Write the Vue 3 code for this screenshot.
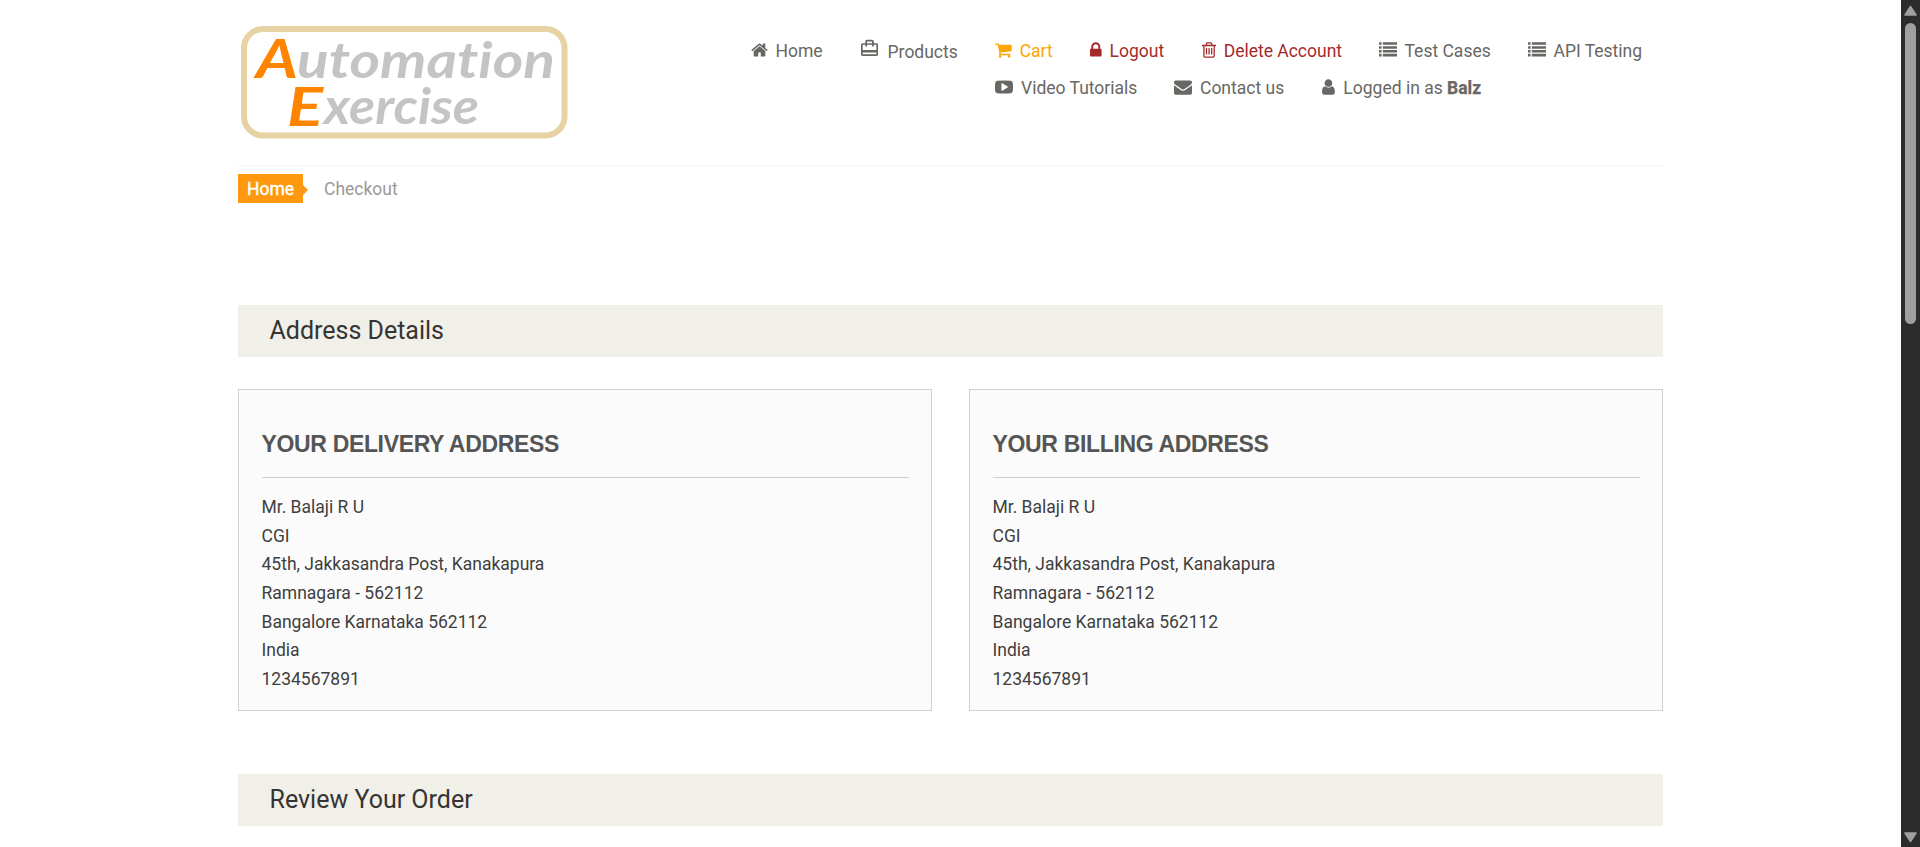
<script setup>
const icons = {
  home: { box: '49 0 1694 1792', d: 'M1472 992v480q0 26-19 45t-45 19h-384v-384h-256v384h-384q-26 0-45-19t-19-45v-480q0-1 .5-3t.5-3l575-474 575 474q1 2 1 6zm223-69l-62 74q-8 9-21 11h-3q-13 0-21-7l-692-577-692 577q-12 8-24 7-13-2-21-11l-62-74q-8-10-7-23.5t11-21.5l719-599q32-26 76-26t76 26l244 204v-195q0-14 9-23t23-9h192q14 0 23 9t9 23v408l219 182q10 8 11 21.5t-7 23.5z' },
  bag: { box: '2 0 20 24', d: 'M20 6h-3V4c0-1.11-.89-2-2-2H9c-1.11 0-2 .89-2 2v2H4c-1.11 0-2 .89-2 2v11c0 1.11.89 2 2 2h16c1.11 0 2-.89 2-2V8c0-1.11-.89-2-2-2zM9 4h6v2H9V4zm11 15H4v-2h16v2zm0-5H4V8h3v2h2V8h6v2h2V8h3v6z' },
  cart: { box: '64 0 1664 1792', d: 'M704 1536q0 52-38 90t-90 38-90-38-38-90 38-90 90-38 90 38 38 90zm896 0q0 52-38 90t-90 38-90-38-38-90 38-90 90-38 90 38 38 90zm128-1088v512q0 24-16.5 42.5t-40.5 21.5l-1044 122q13 60 13 70 0 16-24 64h920q26 0 45 19t19 45-19 45-45 19h-1024q-26 0-45-19t-19-45q0-11 8-31.5t16-36 21.5-40 15.5-29.5l-177-823h-204q-26 0-45-19t-19-45 19-45 45-19h256q16 0 28.5 6.5t19.5 15.5 13 24.5 8 26 5.5 29.5 4.5 26h1201q26 0 45 19t19 45z' },
  lock: { box: '320 0 1152 1792', d: 'M640 768h512v-192q0-106-75-181t-181-75-181 75-75 181v192zm832 96v576q0 40-28 68t-68 28h-960q-40 0-68-28t-28-68v-576q0-40 28-68t68-28h32v-192q0-184 132-316t316-132 316 132 132 316v192h32q40 0 68 28t28 68z' },
  trash: { box: '192 0 1408 1792', d: 'M704 736v576q0 14-9 23t-23 9h-64q-14 0-23-9t-9-23v-576q0-14 9-23t23-9h64q14 0 23 9t9 23zm256 0v576q0 14-9 23t-23 9h-64q-14 0-23-9t-9-23v-576q0-14 9-23t23-9h64q14 0 23 9t9 23zm256 0v576q0 14-9 23t-23 9h-64q-14 0-23-9t-9-23v-576q0-14 9-23t23-9h64q14 0 23 9t9 23zm128 724v-948h-896v948q0 22 7 40.5t14.5 27 10.5 8.5h832q3 0 10.5-8.5t14.5-27 7-40.5zm-672-1076h448l-48-117q-7-9-17-11h-317q-10 2-17 11zm928 32v64q0 14-9 23t-23 9h-96v948q0 83-47 143.5t-113 60.5h-832q-66 0-113-58.5t-47-141.5v-952h-96q-14 0-23-9t-9-23v-64q0-14 9-23t23-9h309l70-167q15-37 54-63t79-26h320q40 0 79 26t54 63l70 167h309q14 0 23 9t9 23z' },
  list: { box: '0 0 1792 1792', d: 'M0 128h256v256H0zM384 128h1408v256H384zM0 512h256v256H0zM384 512h1408v256H384zM0 896h256v256H0zM384 896h1408v256H384zM0 1280h256v256H0zM384 1280h1408v256H384z' },
  video: { box: '0 0 1792 1792', d: 'M1280 896q0-37-30-54l-512-320q-31-20-65-2-33 18-33 56v640q0 38 33 56 16 8 31 8 20 0 34-10l512-320q30-17 30-54zm512 0q0 96-1 150t-8.5 136.5-22.5 147.5q-16 73-69 123t-124 58q-222 25-671 25t-671-25q-71-8-124.5-58t-69.5-123q-14-65-21.5-147.5t-8.5-136.5-1-150 1-150 8.5-136.5 22.5-147.5q16-73 69-123t124-58q222-25 671-25t671 25q71 8 124.5 58t69.5 123q14 65 21.5 147.5t8.5 136.5 1 150z' },
  mail: { box: '0 0 1792 1792', d: 'M1792 710v794q0 66-47 113t-113 47h-1472q-66 0-113-47t-47-113v-794q44 49 101 87 362 246 497 345 57 42 92.5 65.5t94.5 48 110 24.5h2q51 0 110-24.5t94.5-48 92.5-65.5q170-123 498-345 57-39 100-87zm0-294q0 79-49 151t-122 123q-376 261-468 325-10 7-42.5 31t-54 38.5-52 32.5-57.5 27-50 9h-2q-23 0-50-9t-57.5-27-52-32.5-54-38.5-42.5-31q-91-64-262-182.5t-205-142.5q-62-42-117-115.5t-55-136.5q0-78 41.5-130t118.5-52h1472q65 0 112.5 47t47.5 113z' },
  user: { box: '256 0 1280 1792', d: 'M1536 1399q0 109-62.5 187t-150.5 78h-854q-88 0-150.5-78t-62.5-187q0-85 8.5-160.5t31.5-152 58.5-131 94-89 134.5-34.5q131 128 313 128t313-128q76 0 134.5 34.5t94 89 58.5 131 31.5 152 8.5 160.5zm-256-887q0 159-112.5 271.5t-271.5 112.5-271.5-112.5-112.5-271.5 112.5-271.5 271.5-112.5 271.5 112.5 112.5 271.5z' }
}
const rows = [
  [
    { icon: 'home', text: 'Home' },
    { icon: 'bag', text: 'Products' },
    { icon: 'cart', text: 'Cart', tone: 'orange' },
    { icon: 'lock', text: 'Logout', tone: 'red' },
    { icon: 'trash', text: 'Delete Account', tone: 'red' },
    { icon: 'list', text: 'Test Cases' },
    { icon: 'list', text: 'API Testing' }
  ],
  [
    { icon: 'video', text: 'Video Tutorials' },
    { icon: 'mail', text: 'Contact us' },
    { icon: 'user', text: 'Logged in as ', bold: 'Balz' }
  ]
]
const lines = ['Mr. Balaji R U', 'CGI', '45th, Jakkasandra Post, Kanakapura', 'Ramnagara - 562112', 'Bangalore Karnataka 562112', 'India', '1234567891']
const cards = ['Your delivery address', 'Your billing address']
</script>

<template>
  <div class="viewport">
    <main class="page">
      <header class="header">
        <svg class="logo" width="332" height="116" viewBox="0 0 332 116">
          <rect x="6" y="4" width="320.500" height="106.500" rx="19" />
          <g class="word">
            <text class="big" x="18" y="53" textLength="42" lengthAdjust="spacingAndGlyphs">A</text>
            <text x="59" y="53" textLength="258" lengthAdjust="spacingAndGlyphs">utomation</text>
            <text class="big" x="49" y="101" textLength="36" lengthAdjust="spacingAndGlyphs">E</text>
            <text x="86" y="99" textLength="155" lengthAdjust="spacingAndGlyphs">xercise</text>
          </g>
        </svg>
        <nav class="nav">
          <ul v-for="(row, i) in rows" :key="i" :class="['row', 'row' + (i + 1)]">
            <li v-for="item in row" :key="item.text" :class="['item', item.icon, item.tone]">
              <svg class="icon" :viewBox="icons[item.icon].box"><path :d="icons[item.icon].d" /></svg>
              <span>{{ item.text }}<b v-if="item.bold">{{ item.bold }}</b></span>
            </li>
          </ul>
        </nav>
      </header>

      <div class="crumbs">
        <span class="tag">Home</span>
        <span class="current">Checkout</span>
      </div>

      <h2 class="bar">Address Details</h2>

      <section class="cards">
        <article v-for="title in cards" :key="title" class="card">
          <h3>{{ title }}</h3>
          <ul>
            <li v-for="line in lines" :key="line">{{ line }}</li>
          </ul>
        </article>
      </section>

      <h2 class="bar">Review Your Order</h2>
    </main>

    <aside class="scroll">
      <svg width="19" height="23" viewBox="0 0 19 23"><path d="M9.500 6.500L15 15H4z" /></svg>
      <div class="thumb"></div>
      <svg class="down" width="19" height="23" viewBox="0 0 19 23"><path d="M4 9h11l-5.500 8.500z" /></svg>
    </aside>
  </div>
</template>

<style>
html, body { margin: 0; overflow: hidden; background: #fff; }
</style>

<style scoped>
.viewport { display: flex; justify-content: space-between; width: 1920px; height: 847px; overflow: hidden; font-family: Roboto, sans-serif; font-size: 17.5px; }
ul { list-style: none; margin: 0; padding: 0; }
.page { width: 1425px; margin-left: 238px; }
.header { display: flex; height: 165px; border-bottom: 1px solid #f5f5f5; box-sizing: content-box; }
.logo { margin: 25px 0 0; flex: none; }
.logo rect { fill: #fff; stroke: #e6d2a2; stroke-width: 6; }
.word { font-family: Lato, sans-serif; font-style: italic; font-weight: 700; font-size: 50px; font-variant-ligatures: none; fill: #c4c4c4; }
.word .big { fill: #ff8400; font-size: 54px; }
.nav { margin: 33px 0 0 181px; flex: none; color: #696763; }
.row { display: grid; height: 37px; align-items: start; }
.row1 { grid-template-columns: 110px 134px 95px 112px 177px 149px 115px; }
.row2 { grid-template-columns: 179px 148px 160px; margin-left: 244px; }
.item { display: flex; height: 37px; line-height: 37px; white-space: nowrap; }
.icon { height: 18px; width: auto; margin: 8px 7.500px 0 0; fill: currentColor; flex: none; }
.video .icon, .mail .icon, .cart .icon, .lock .icon { margin-right: 8px; }
.user .icon { margin-right: 8.500px; }
.home .icon { margin: 8px 8px 0 -.5px; }
.bag .icon { height: 20.500px; margin: 5px 9.500px 0 0; }
.bag span { position: relative; top: 1px; }
.item b { -webkit-text-stroke: .25px currentColor; }
.orange { color: #fea500; }
.red { color: #a52a2a; }
.crumbs { display: flex; height: 139px; align-items: flex-start; padding-top: 8px; box-sizing: border-box; color: #999; }
.tag { position: relative; width: 65px; height: 29px; line-height: 31px; box-sizing: border-box; padding-left: 9px; background: #fe980f; color: #fff; -webkit-text-stroke: .4px #fff; }
.tag::after { content: ""; position: absolute; left: 65px; top: 10.500px; border: 5px solid transparent; border-left-color: #fe980f; border-right: 0; }
.current { line-height: 31px; margin-left: 21px; }
.bar { margin: 0; height: 52px; line-height: 51px; padding-left: 31.500px; box-sizing: border-box; background: #f0f0e9; color: #363432; font-size: 25px; font-weight: 400; }
.cards { display: grid; grid-template-columns: 694px 694px; gap: 37px; margin: 32px 0 63px; }
.card { box-sizing: border-box; height: 322px; padding: 33px 22.500px 0; border: 1px solid #d0d0d0; background: #fbfbfb; color: #3f3f3f; }
.card h3 { margin: 0 0 15px; height: 54px; line-height: 43px; border-bottom: 1px solid #d0d0d0; font-family: "Liberation Sans", Arial, sans-serif; font-size: 23px; letter-spacing: -.34px; font-weight: 700; color: #555; text-transform: uppercase; }
.card li { height: 28.700px; line-height: 29px; }
.scroll { width: 19px; height: 847px; background: #2c2c2c; display: flex; flex-direction: column; align-items: center; }
.scroll path { fill: #9f9f9f; stroke: #9f9f9f; stroke-linejoin: round; stroke-width: 1.500px; }
.thumb { width: 11px; height: 301px; border-radius: 6px; background: #9f9f9f; }
.scroll .down { margin-top: auto; }
</style>
